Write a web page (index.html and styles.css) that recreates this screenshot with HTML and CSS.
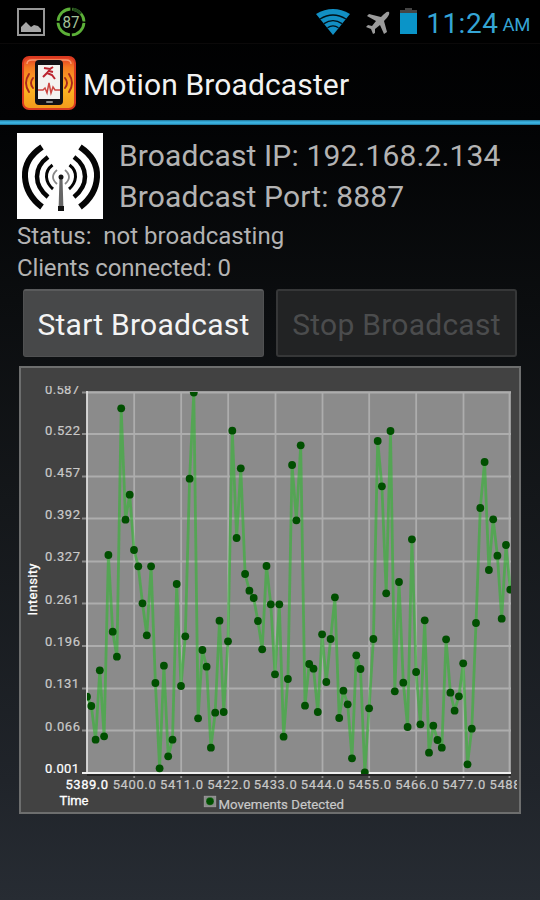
FILE: index.html
```
<!DOCTYPE html>
<html lang="en">
<head>
<meta charset="utf-8">
<title>Motion Broadcaster</title>
<link rel="stylesheet" href="styles.css">
</head>
<body>
<header class="status-bar">
  <svg class="icon-picture" viewBox="0 0 28 28" width="28" height="28"><rect x="1" y="1" width="26" height="26" fill="#000" stroke="#979797" stroke-width="2"/><path d="M4 24v-5l5-5 3 3 2 2 3-2 4 1 3 3v3z" fill="#a6a6a6"/></svg>
  <svg class="icon-level" viewBox="0 0 30 30" width="30" height="30"><circle cx="15" cy="15" r="13" fill="none" stroke="#5cb038" stroke-width="2.8" stroke-dasharray="18.4 2.02" stroke-dashoffset="-1"/><path d="M17 2.2a13 13 0 0 1 8 4.5" fill="none" stroke="#20481a" stroke-width="3"/><text x="15" y="20.8" class="level-text" text-anchor="middle" textLength="17" lengthAdjust="spacingAndGlyphs">87</text></svg>
  <span class="spacer"></span>
  <svg class="icon-wifi" viewBox="0 0 34 26" width="34" height="26"><path d="M0 5Q17-5 34 5L17 26Z" fill="#128fc4"/><g fill="none" stroke="#001017" stroke-width="1.3"><path d="M4 10q13-8 26 0"/><path d="M8 14.6q9-6 18 0"/><path d="M11.500 18.800q5.500-4 11 0"/></g></svg>
  <svg class="icon-plane" viewBox="0 0 24 24" width="24" height="24"><path d="M23 1c-2-1-4 1-8 5L3 3 1 5l9 5-4 5-4-1-2 2 5 2 2 5 2-1v-4l5-4 4 9 3-2-3-11c4-4 6-7 5-9z" fill="#9b9b9b"/></svg>
  <svg class="icon-battery" viewBox="0 0 17 26" width="17" height="26"><path d="M5 0h7v2h5v4H0V2h5z" fill="#454545"/><path d="M0 5h17v21H0z" fill="#0a94c8"/></svg>
  <span class="clock">11:24</span><span class="meridiem">AM</span>
</header>

<div class="action-bar">
  <svg class="app-icon" viewBox="0 0 54 54" width="54" height="54">
    <defs><linearGradient id="app" x2="0" y2="1"><stop stop-color="#e33a25"/><stop offset=".2" stop-color="#f47a22"/><stop offset=".6" stop-color="#fdb422"/><stop offset="1" stop-color="#f39a1c"/></linearGradient></defs>
    <rect x="1" y="1" width="52" height="52" rx="6" fill="url(#app)" stroke="#d93a20" stroke-width="2"/>
    <path d="M5 8q0-4 5-4h34q5 0 5 4" fill="none" stroke="#fa9a70" stroke-width="1.500"/>
    <g fill="none" stroke="#a8281c" stroke-width="1.900" stroke-linecap="round"><path d="M11 22q-4 5 0 10M7 18q-6 9 0 18M43 22q4 5 0 10M47 18q6 9 0 18"/></g>
    <rect x="13" y="4" width="28" height="45" rx="4" fill="#111015"/>
    <rect x="16" y="9" width="22" height="34" fill="#f4f2f0"/>
    <path d="M22 12l6 1 3-2M29 12l-4 5 5 2 3 4M25 17l-4 4M27 15l4 1" fill="none" stroke="#bb2430" stroke-width="2"/>
    <path d="M16 34h5l2-2 2 5 2-10 2 10 2-6 2 3h5" fill="none" stroke="#cc4540" stroke-width="1.500"/>
    <rect x="24" y="45" width="7" height="2" rx="1" fill="#888"/>
  </svg>
  <h1>Motion Broadcaster</h1>
</div>

<main>
  <section class="info">
    <svg class="antenna" viewBox="0 0 86 86" width="86" height="86">
      <rect width="86" height="86" fill="#fff"/>
      <g fill="none" stroke="#050505">
        <path d="M25 14Q7 26 8 44T25 74" stroke-width="6"/><path d="M63 14Q81 26 80 44T63 74" stroke-width="6"/>
        <path d="M31 24Q20 32 20 43.500T31 64" stroke-width="4.500"/><path d="M57 24Q68 32 68 43.500T57 64" stroke-width="4.500"/>
        <path d="M35.500 32Q29 37 29.500 44T36 56" stroke-width="3"/><path d="M52.500 32Q59 37 58.500 44T52 56" stroke-width="3"/>
        <path d="M40 37Q32 44 40 51M48 37Q56 44 48 51" stroke="#888" stroke-width="1.800"/>
      </g>
      <path d="M42.500 45h3l1 33h-5z" fill="#666"/><circle cx="44" cy="44" r="2.500" fill="#111"/><path d="M41 73h6v5h-6z" fill="#111"/>
    </svg>
    <div class="address">
      <div class="ip">Broadcast IP: 192.168.2.134</div>
      <div class="port">Broadcast Port: 8887</div>
    </div>
  </section>
  <div class="state">Status:&nbsp; not broadcasting</div>
  <div class="clients">Clients connected: 0</div>
  <div class="buttons">
    <button class="btn" type="button"><span>Start Broadcast</span></button>
    <button class="btn btn-off" type="button" disabled><span>Stop Broadcast</span></button>
  </div>
  <section class="chart">
    <svg viewBox="19 366 502 448" width="502" height="448">
      <defs>
        <marker id="dot" viewBox="-5 -5 10 10" markerWidth="10" markerHeight="10" markerUnits="userSpaceOnUse"><circle r="3.900" fill="#004f00"/></marker>
        <clipPath id="plot"><path d="M87 392h424v382H87z"/></clipPath>
        <clipPath id="labels"><path d="M20 386h497v428H20z"/></clipPath>
      </defs>
      <path d="M87 391h424v382H87z" fill="#8b8b8b"/>
      <path class="grid" d="M82 392.500h429M82 434h429M82 476.500h429M82 518.500h429M82 561.500h429M82 603.500h429M82 646h429M82 688.500h429M82 730.500h429M134.200 392v386M181.200 392v386M228.200 392v386M275.500 392v386M322.500 392v386M369.200 392v386M416.200 392v386M463.500 392v386M509.500 392v386"/>
      <path d="M87 391v382" stroke="#ddd" stroke-width="1.800" fill="none"/>
      <path d="M87 775h424" stroke="#252525" stroke-width="2"/>
      <path d="M82 773h429" stroke="#eee" stroke-width="2" fill="none"/>
      <g clip-path="url(#plot)">
        <polyline class="series" points="87,696.7 91.300,706 95.600,739.7 99.800,670.3 104.100,736.3 108.400,555 112.700,631.7 116.900,656.7 121.200,408.3 125.500,519.7 129.700,494.7 134,550 138.300,566.3 142.500,603.3 146.800,635.3 151.100,566.3 155.400,683 159.600,768.3 163.900,665.7 168.200,756.3 172.500,739.7 176.700,584 181,686 185.300,636.3 189.600,478.7 193.800,392.500 198.100,718.3 202.400,650 206.600,666.7 210.900,747.7 215.200,712.7 219.500,620.7 223.700,712 228,641.3 232.300,430.7 236.600,538 240.800,468.3 245.100,574 249.400,590.7 253.700,598 257.900,621 262.200,649.3 266.500,566 270.800,604.3 275,674.3 279.300,604.3 283.600,736.7 287.900,679 292.100,465 296.400,520.3 300.700,445.3 305,705.7 309.200,664 313.500,668.7 317.800,712 322.100,634.3 326.300,682 330.600,639 334.900,597.3 339.200,718 343.400,690.7 347.700,704.3 352,758.3 356.300,655.3 360.500,669 364.800,772.3 369.100,708.3 373.400,639 377.700,441 381.900,486.3 386.200,593.3 390.500,431 394.800,691.3 399,582 403.300,682.7 407.600,727 411.900,539.3 416.100,672 420.400,724.3 424.700,620.3 429,752.7 433.300,725.7 437.500,740 441.800,747.7 446.100,639.3 450.400,692.7 454.600,710.7 458.900,696.3 463.200,663.3 467.500,764.3 471.800,728.7 476,623 480.300,508 484.600,462 488.900,570 493.200,519.3 497.400,555.7 501.700,618.7 506,545 510.300,589.7"/>
      </g>
      <g class="tick" clip-path="url(#labels)">
        <g class="y-labels">
          <text x="45" y="393.700" textLength="34">0.587</text>
          <text x="45" y="435" textLength="35">0.522</text>
          <text x="45" y="476.700" textLength="35">0.457</text>
          <text x="45" y="519.300" textLength="35">0.392</text>
          <text x="45" y="561" textLength="35">0.327</text>
          <text x="45" y="603.700" textLength="34">0.261</text>
          <text x="45" y="646" textLength="35">0.196</text>
          <text x="45" y="688" textLength="34">0.131</text>
          <text x="45" y="730.500" textLength="35">0.066</text>
          <text x="45" y="773" textLength="34" class="bright">0.001</text>
        </g>
        <text x="65.500" y="789" textLength="42.500" class="origin">5389.0</text>
        <text x="112.700" y="789" textLength="43">5400.0</text>
        <text x="160" y="789" textLength="43">5411.0</text>
        <text x="207.200" y="789" textLength="43">5422.0</text>
        <text x="253.800" y="789" textLength="43">5433.0</text>
        <text x="300.800" y="789" textLength="43">5444.0</text>
        <text x="348" y="789" textLength="43">5455.0</text>
        <text x="395.200" y="789" textLength="43">5466.0</text>
        <text x="442.200" y="789" textLength="43">5477.0</text>
        <text x="489.500" y="789" textLength="43">5488.0</text>
        <text x="59.500" y="804.500" textLength="29" class="origin">Time</text>
        <text transform="translate(37 615.500) rotate(-90)" textLength="52" class="origin">Intensity</text>
        <rect x="204" y="796" width="12" height="11" fill="#8b8b8b"/><circle cx="210" cy="801.300" r="4" fill="#004f00"/>
        <text x="218.500" y="809" textLength="125.500" lengthAdjust="spacingAndGlyphs">Movements Detected</text>
      </g>
    </svg>
  </section>
</main>
</body>
</html>
```
FILE: styles.css
```
* { box-sizing: border-box; }
html { background: #272c33; }
body {
  margin: 0;
  width: 540px;
  height: 900px;
  overflow: hidden;
  background: linear-gradient(#000 0, #020304 120px, #0b0d0f 300px, #14171a 500px, #20242a 780px, #272c33 900px);
  font-family: Roboto, "Liberation Sans", sans-serif;
  color: #b3b3b3;
}
svg { display: block; flex: none; }
.status-bar {
  display: flex;
  align-items: flex-start;
  height: 44px;
  padding: 8px 11px 0 17px;
  background: #000;
  border-bottom: 1px solid #0b0909;
  color: #35a5d5;
}
.icon-level { margin: -1px 0 0 11px; }
.level-text { font-size: 16px; fill: #a4c39a; }
.spacer { flex: 1; }
.icon-wifi { margin-top: 1px; }
.icon-plane { margin: 3px 0 0 16px; }
.icon-battery { margin-left: 10px; }
.clock { margin-left: 9px; font-size: 28px; line-height: 31px; letter-spacing: .5px; }
.meridiem { margin-left: 4px; font-size: 18.5px; line-height: 35px; letter-spacing: -.3px; margin-right: -1px; }
.action-bar {
  display: flex;
  align-items: center;
  height: 81px;
  padding: 0 0 5px 22px;
  background: linear-gradient(#1f6f91, #3ab3e2 40%, #3ab3e2 65%, #1f6f91) bottom / 100% 5px no-repeat;
}
.app-icon { margin-top: 2px; }
h1 { margin: 5px 0 0 7px; font-size: 30px; font-weight: 400; line-height: 34px; letter-spacing: .13px; color: #f2f2f2; white-space: nowrap; }
main { padding: 8px 17px 0; }
.info { display: flex; }
.antenna { margin-left: -.5px; }
.address { margin-left: 16.5px; font-size: 30px; line-height: 41px; letter-spacing: .14px; white-space: nowrap; padding-top: 2px; }
.state, .clients { font-size: 24px; line-height: 32px; white-space: nowrap; }
.state { margin-top: 1px; }
.clients { letter-spacing: -.15px; }
.buttons { display: flex; gap: 12px; margin: 5px 6px 0; }
.btn {
  display: flex;
  align-items: center;
  justify-content: center;
  width: 241px;
  height: 68px;
  padding: 2px 0 0;
  border: 1px solid #505152;
  border-top: 2px solid #5a5b5c;
  border-radius: 3px;
  background: #474849;
  font: 400 30px Roboto, "Liberation Sans", sans-serif;
  letter-spacing: .25px;
  color: #f4f4f4;
  white-space: nowrap;
}
.btn-off { background: #222324; border: 2px solid #363738; color: #4b4c4d; }
.chart {
  width: 502px;
  height: 448px;
  margin: 9px 0 0 2px;
  background: #424242;
  box-shadow: inset 0 0 0 2px #6d6e6e;
}
.grid { fill: none; stroke: #cfcfcf; stroke-opacity: .5; stroke-width: 1.8; }
.series {
  fill: none;
  stroke: #30b830;
  stroke-opacity: .6;
  stroke-width: 2.8;
  stroke-linejoin: bevel;
  marker-start: url(#dot);
  marker-mid: url(#dot);
  marker-end: url(#dot);
}
.tick { font-size: 13px; fill: #c9c9c9; stroke: #c9c9c9; stroke-width: .2px; }
.bright { fill: #fff; stroke: #fff; }
.origin { fill: #fff; stroke: #fff; stroke-width: .3px; }
```
